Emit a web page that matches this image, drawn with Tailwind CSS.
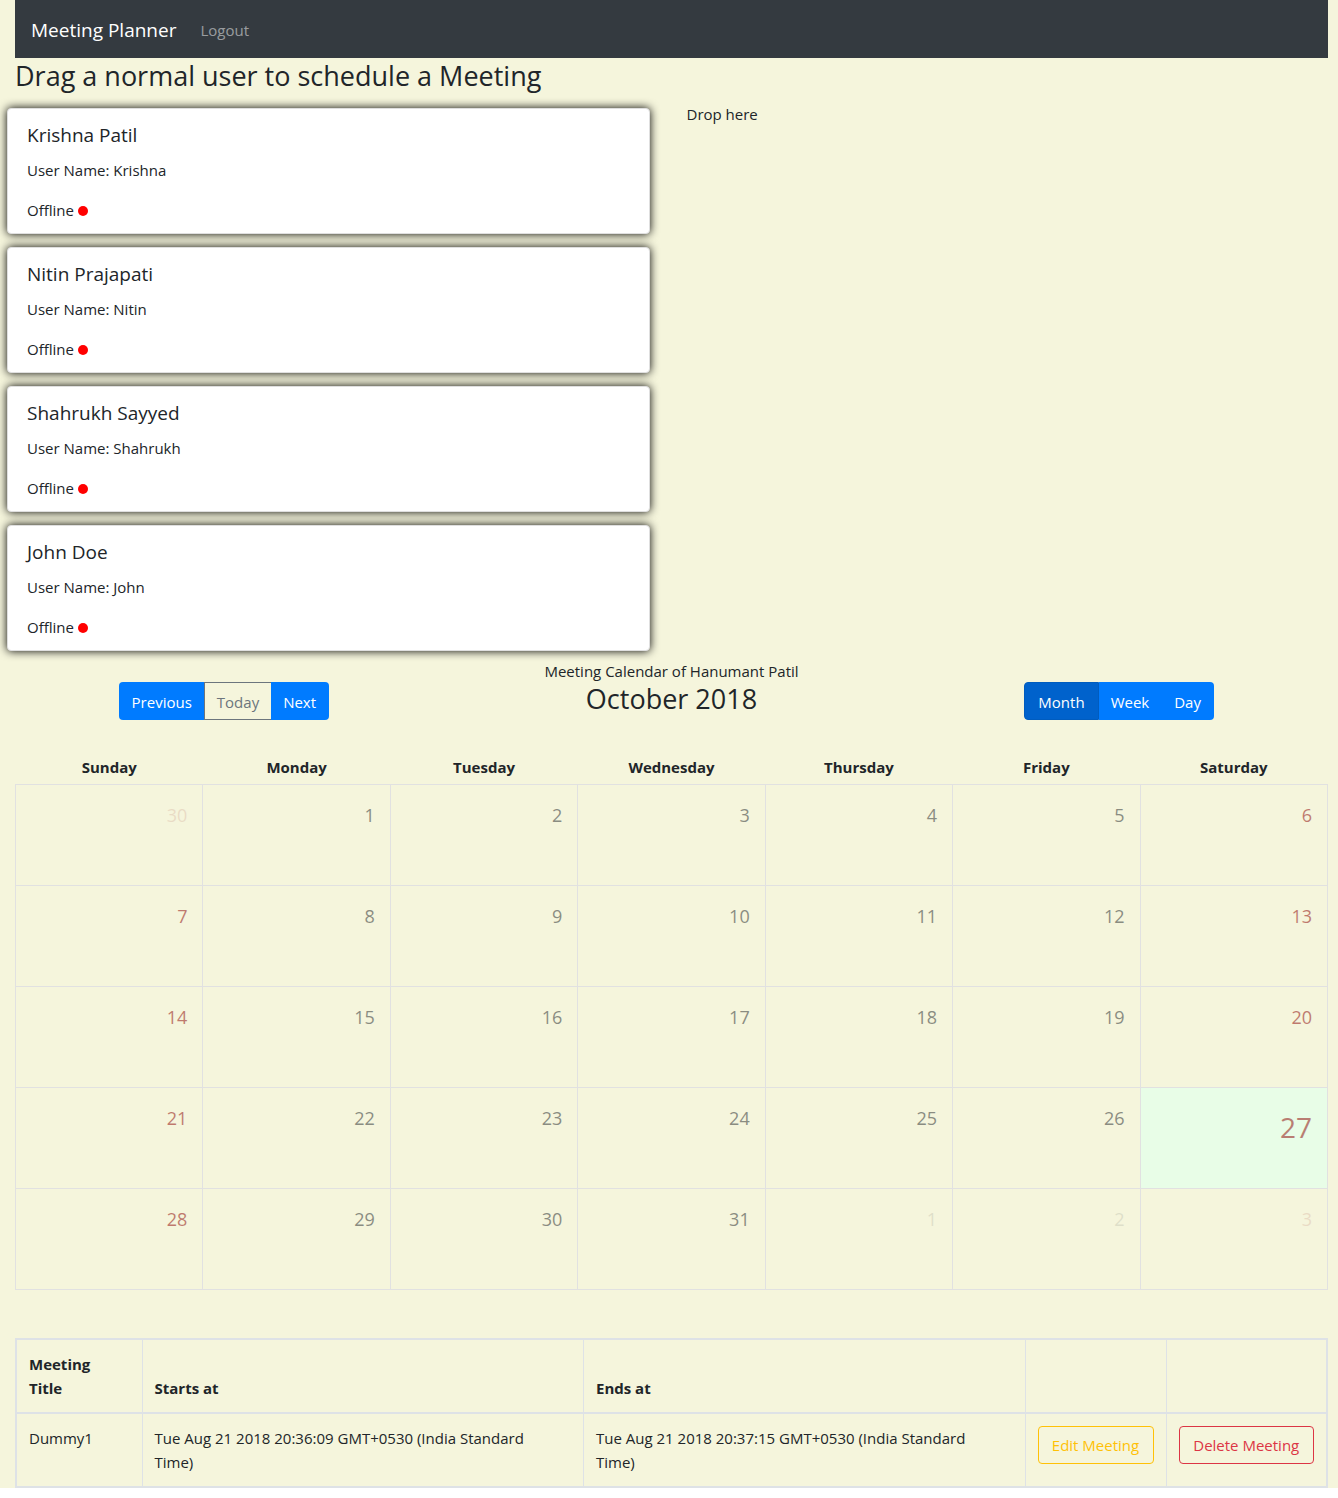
<!DOCTYPE html>
<html lang="en">
<head>
<meta charset="utf-8">
<meta name="viewport" content="width=device-width, initial-scale=1">
<title>Meeting Planner</title>
<script src="https://cdn.jsdelivr.net/npm/@tailwindcss/browser@4"></script>
</head>
<body class="bg-white font-['Segoe_UI','Open_Sans',sans-serif] text-[15px] leading-6 text-[#212529]">
<div class="overflow-x-clip bg-[#f5f5dc] pr-[10px] pl-[15px]">

  <nav class="flex h-[58px] items-center gap-6 bg-[#343a40] px-4 pt-[2px]">
    <a href="#" class="text-[19px] text-white">Meeting Planner</a>
    <a href="#" class="text-white/50">Logout</a>
  </nav>

  <main>
    <h1 class="pt-[2px] text-[27px] leading-8">Drag a normal user to schedule a Meeting</h1>

    <section class="-mx-[15px] mt-4 grid grid-cols-2">
      <ul id="users" class="mr-[22px] ml-[7px] flex flex-col gap-[13px]"></ul>
      <div class="-mt-[6px] px-[15px]">Drop here</div>
    </section>

    <section>
      <p class="mt-2 text-center">Meeting Calendar of Hanumant Patil</p>
      <div class="-mx-[15px] grid grid-cols-3 text-center">
        <div class="-mt-px">
          <div class="inline-flex h-[38px] text-white">
            <button type="button" class="rounded-l bg-[#007bff] pr-3 pl-[13px] pt-[2px]">Previous</button>
            <button type="button" class="border border-r-0 border-[#6c757d] px-3 pt-[2px] text-[#6c757d]">Today</button>
            <button type="button" class="rounded-r bg-[#007bff] pr-[13px] pl-3 pt-[2px]">Next</button>
          </div>
        </div>
        <h2 class="text-[27px] leading-8">October 2018</h2>
        <div class="-mt-px">
          <div class="inline-flex h-[38px] text-white">
            <button type="button" class="rounded-l border border-[#005cbf] bg-[#0062cc] px-[13px] pt-[2px]" aria-pressed="true">Month</button>
            <button type="button" class="bg-[#007bff] px-3 pt-[2px]">Week</button>
            <button type="button" class="rounded-r bg-[#007bff] px-[13px] pt-[2px]">Day</button>
          </div>
        </div>
      </div>

      <table class="mt-8 w-full table-fixed border-collapse">
        <thead>
          <tr class="h-8">
            <th class="pb-[2px]">Sunday</th><th class="pb-[2px]">Monday</th><th class="pb-[2px]">Tuesday</th><th class="pb-[2px]">Wednesday</th><th class="pb-[2px]">Thursday</th><th class="pb-[2px]">Friday</th><th class="pb-[2px]">Saturday</th>
          </tr>
        </thead>
        <tbody id="days"></tbody>
      </table>
    </section>

    <table class="mt-12 w-full table-fixed border-collapse border-2 border-[#dee2e6]">
      <colgroup>
        <col class="w-[126px]"><col><col><col class="w-[141px]"><col class="w-[161px]">
      </colgroup>
      <thead>
        <tr class="border-b-2 border-[#dee2e6] text-left align-bottom">
          <th class="border-r border-[#dee2e6] py-3 pr-8 pl-3">Meeting Title</th>
          <th class="border-r border-[#dee2e6] py-3 pr-8 pl-3">Starts at</th>
          <th class="border-r border-[#dee2e6] py-3 pr-8 pl-3">Ends at</th>
          <th class="border-r border-[#dee2e6] p-3"></th>
          <th class="p-3"></th>
        </tr>
      </thead>
      <tbody>
        <tr class="align-top">
          <td class="border-r border-[#dee2e6] py-3 pr-8 pl-3">Dummy1</td>
          <td class="border-r border-[#dee2e6] py-3 pr-8 pl-3">Tue Aug 21 2018 20:36:09 GMT+0530 (India Standard Time)</td>
          <td class="border-r border-[#dee2e6] py-3 pr-8 pl-3">Tue Aug 21 2018 20:37:15 GMT+0530 (India Standard Time)</td>
          <td class="border-r border-[#dee2e6] px-3 pt-3"><button type="button" class="block h-[38px] w-full rounded border border-[#ffc107] whitespace-nowrap text-[#ffc107]">Edit Meeting</button></td>
          <td class="px-3 pt-3"><button type="button" class="block h-[38px] w-full rounded border border-[#dc3545] whitespace-nowrap text-[#dc3545]">Delete Meeting</button></td>
        </tr>
      </tbody>
    </table>
  </main>
</div>

<script>
  const users = [['Krishna Patil', 'Krishna'], ['Nitin Prajapati', 'Nitin'], ['Shahrukh Sayyed', 'Shahrukh'], ['John Doe', 'John']];
  document.getElementById('users').innerHTML = users.map(([full, name]) => `
    <li draggable="true" class="h-[126px] rounded border border-[#dfdfdf] bg-white px-[19px] pt-[14px] shadow-[0_0_10px_#000]">
      <h3 class="text-[19px] leading-6">${full}</h3>
      <p class="mt-[11px]">User Name: ${name}</p>
      <p class="mt-4 flex items-center gap-1">Offline <span class="mt-[2px] size-[10px] rounded-full bg-[#ff0000]"></span></p>
    </li>`).join('');

  let rows = '';
  for (let w = 0; w < 5; w++) {
    rows += '<tr class="h-[101px] text-right align-top">';
    for (let d = 0; d < 7; d++) {
      const n = w * 7 + d;
      const outside = n < 1 || n > 31;
      const label = n < 1 ? 30 : n > 31 ? n - 31 : n;
      const today = n === 27;
      const color = d === 0 || d === 6 ? 'text-[#8b0000]' : 'text-[#212529]';
      const fade = outside ? 'opacity-10' : 'opacity-50';
      const size = today ? 'text-[28px] leading-[50px]' : 'text-lg leading-8';
      rows += `<td class="border border-[#e1e1e1] pt-[14px] pr-[15px] ${today ? 'bg-[#e8fde7]' : ''}"><span class="block ${size} ${color} ${fade}">${label}</span></td>`;
    }
    rows += '</tr>';
  }
  document.getElementById('days').innerHTML = rows;
</script>
</body>
</html>
